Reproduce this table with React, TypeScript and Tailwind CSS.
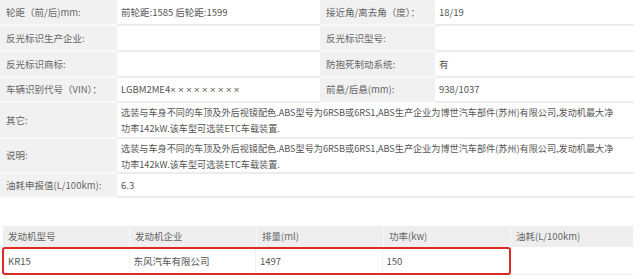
import React from 'react';

const font = { fontFamily: '"Noto Sans CJK SC", "Noto Sans", sans-serif' };

const LONG_1 = '选装与车身不同的车顶及外后视镜配色.ABS型号为6RSB或6RS1,ABS生产企业为博世汽车部件(苏州)有限公司,发动机最大净';
const LONG_2 = '功率142kW.该车型可选装ETC车载装置.';

const Vin = () => (
  <span>
    LGBM2ME4
    <span className="tracking-[2.4px]" style={{ fontFamily: '"Liberation Sans", sans-serif' }}>
      ×××××××××
    </span>
  </span>
);

const pairRows: [string, React.ReactNode, string, string, string][] = [
  ['轮距（前/后)mm:', '前轮距:1585 后轮距:1599', '接近角/离去角（度）：', '18/19', 'h-[26px]'],
  ['反光标识生产企业:', '', '反光标识型号:', '', 'h-[26px]'],
  ['反光标识商标:', '', '防抱死制动系统:', '有', 'h-[26px]'],
  ['车辆识别代号（VIN）：', <Vin />, '前悬/后悬(mm):', '938/1037', 'h-[25px]'],
];

const Label: React.FC<{ text: string; h: string }> = ({ text, h }) => (
  <div className={`${h} flex items-center pl-[6px] bg-[#f1f1f1] border-b-2 border-[#f8f8f8] text-[#666] whitespace-nowrap`}>
    {text}
  </div>
);

const Value: React.FC<{ h: string; span?: boolean; children?: React.ReactNode }> = ({ h, span, children }) => (
  <div className={`${h} ${span ? 'col-span-3' : ''} flex items-center pl-[4px] bg-white border-b-2 border-[#ececec] text-[#555] whitespace-nowrap`}>
    {children}
  </div>
);

const Long = () => (
  <div className="leading-[16px] text-[9.15px]">
    <div>{LONG_1}</div>
    <div>{LONG_2}</div>
  </div>
);

const engineCols = ['发动机型号', '发动机企业', '排量(ml)', '功率(kw)', '油耗(L/100km)'];
const engineRow = ['KR15', '东风汽车有限公司', '1497', '150'];

export default function App() {
  return (
    <div className="w-[640px] h-[279px] bg-white overflow-hidden text-[9.5px] leading-[15px]" style={font}>
      <div className="grid grid-cols-[117px_203px_115px_199px] w-[634px] border-r border-[#e6e6e6]">
        {pairRows.map(([l1, v1, l2, v2, h]) => (
          <React.Fragment key={l1}>
            <Label text={l1} h={h} />
            <Value h={h}>{v1}</Value>
            <Label text={l2} h={h} />
            <Value h={h}>{v2}</Value>
          </React.Fragment>
        ))}
        <Label text="其它:" h="h-[36px]" />
        <Value h="h-[36px]" span>
          <Long />
        </Value>
        <Label text="说明:" h="h-[35px]" />
        <Value h="h-[35px]" span>
          <Long />
        </Value>
        <Label text="油耗申报值(L/100km):" h="h-[24px]" />
        <Value h="h-[24px]" span>6.3</Value>
      </div>

      <div className="mt-[28px] ml-[3px] w-[630px]">
        <div className="flex h-[21px] bg-[#eeeeee] text-[#666]">
          {engineCols.map((c, i) => (
            <div key={c} className={`flex items-center pl-[5px] ${i < 4 ? 'w-[127px] border-r border-[#f7f7f7]' : 'flex-1'}`}>
              {c}
            </div>
          ))}
        </div>
        <div className="flex h-[28px] text-[#555]">
          <div className="flex w-[509px] -ml-[1px] border-2 border-[#dd2a25] rounded-[3px]">
            {engineRow.map((c, i) => (
              <div key={c} className={`flex items-center pl-[4px] ${i === 0 ? 'w-[126px]' : 'w-[127px]'} ${i < 3 ? 'border-r border-[#f0f0f0]' : ''}`}>
                {c}
              </div>
            ))}
          </div>
          <div className="flex-1 border-b border-[#ececec]" />
        </div>
      </div>
    </div>
  );
}
